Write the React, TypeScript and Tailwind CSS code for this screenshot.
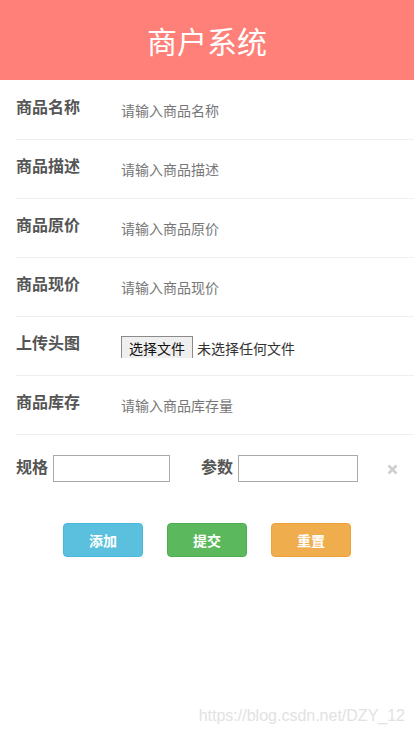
import React from "react";

const font = { fontFamily: '"Noto Sans CJK SC", "Microsoft YaHei", sans-serif' };

function Row({ label, children }: { label: string; children: React.ReactNode }) {
  return (
    <div className="flex items-start h-[59px] ml-4 pt-[13px] border-b border-[#efefef]">
      <div className="w-[105px] shrink-0 text-base leading-6 font-bold text-[#555]">{label}</div>
      {children}
    </div>
  );
}

function Ph({ text }: { text: string }) {
  return <div className="mt-[6px] text-sm leading-5 text-[#777]">{text}</div>;
}

export default function App() {
  return (
    <div className="w-[414px] h-[736px] bg-white relative overflow-hidden" style={font}>
      <div className="h-[80px] bg-[#ff7f79] flex items-center justify-center">
        <div className="text-[30px] leading-none text-white">商户系统</div>
      </div>
      <div className="h-px"></div>
      <Row label="商品名称"><Ph text="请输入商品名称" /></Row>
      <Row label="商品描述"><Ph text="请输入商品描述" /></Row>
      <Row label="商品原价"><Ph text="请输入商品原价" /></Row>
      <Row label="商品现价"><Ph text="请输入商品现价" /></Row>
      <Row label="上传头图">
        <div className="mt-[6px] flex items-start">
          <div className="h-[22px] w-[72px] border border-b-0 border-[#8a8a8a] bg-[#efefef] text-sm leading-[22px] text-[#111] text-center">选择文件</div>
          <div className="ml-1 text-sm leading-[22px] text-[#333] pt-[1px]">未选择任何文件</div>
        </div>
      </Row>
      <Row label="商品库存"><Ph text="请输入商品库存量" /></Row>
      <div className="flex items-start ml-4 pt-[20px]">
        <div className="text-base leading-6 font-bold text-[#555] mt-[-1px]">规格</div>
        <div className="ml-[5px] w-[117px] h-[27px] border border-[#a9a9a9]"></div>
        <div className="ml-[31px] text-base leading-6 font-bold text-[#555] mt-[-1px]">参数</div>
        <div className="ml-[5px] w-[120px] h-[27px] border border-[#a9a9a9]"></div>
        <div className="ml-[29px] mt-[9px]">
          <svg width="11" height="11" viewBox="0 0 11 11">
            <path d="M1.5 1.5 L9.5 9.5 M9.5 1.5 L1.5 9.5" stroke="#cfcfcf" strokeWidth="2.6" />
          </svg>
        </div>
      </div>
      <div className="flex justify-center gap-6 mt-[41px]">
        <div className="w-[80px] h-[34px] rounded bg-[#5bc0de] border border-[#46b8da] text-white text-sm font-bold flex items-center justify-center">添加</div>
        <div className="w-[80px] h-[34px] rounded bg-[#5cb85c] border border-[#4cae4c] text-white text-sm font-bold flex items-center justify-center">提交</div>
        <div className="w-[80px] h-[34px] rounded bg-[#f0ad4e] border border-[#eea236] text-white text-sm font-bold flex items-center justify-center">重置</div>
      </div>
      <div className="absolute right-[9px] bottom-[8px] text-[16px] text-[#e2e2e2]" style={{ fontFamily: '"Liberation Sans", Arial, sans-serif' }}>
        https://blog.csdn.net/DZY_12
      </div>
    </div>
  );
}
